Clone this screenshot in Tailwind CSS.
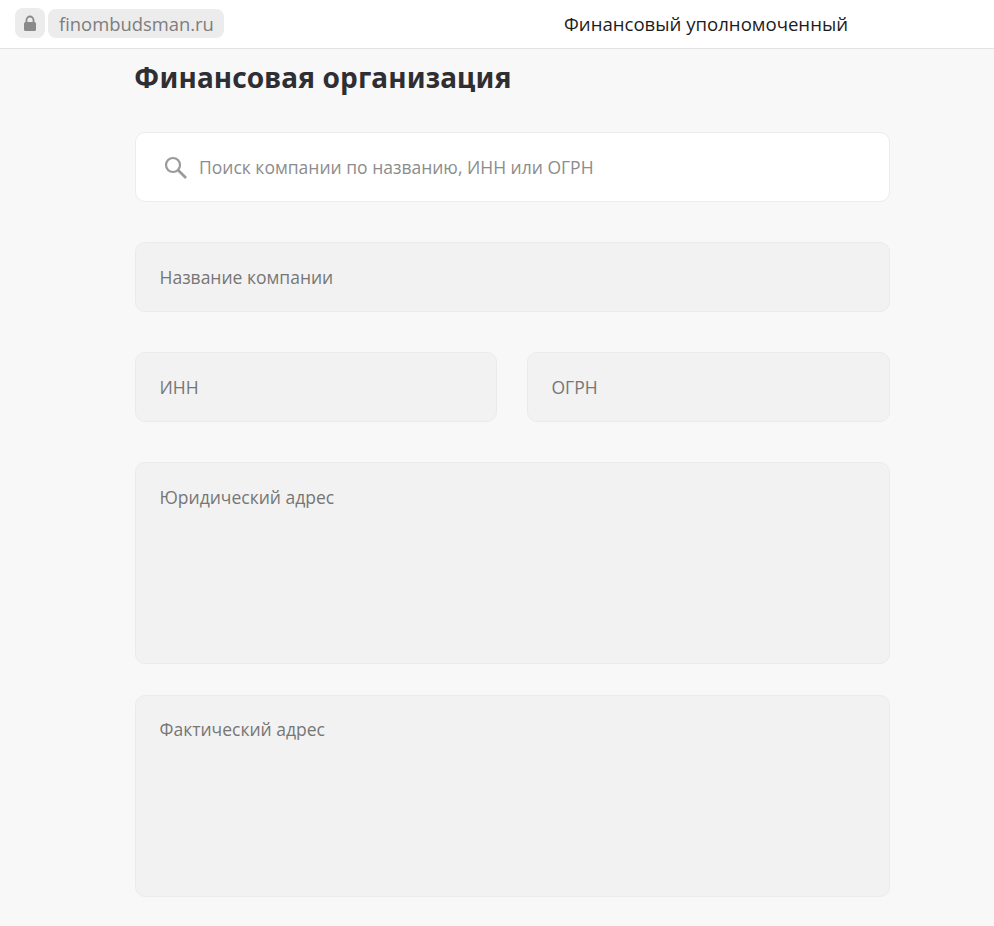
<!DOCTYPE html>
<html lang="ru">
<head>
    <meta charset="UTF-8">
    <meta name="viewport" content="width=device-width, initial-scale=1">
    <title>Финансовый уполномоченный</title>
    <script src="https://cdn.jsdelivr.net/npm/@tailwindcss/browser@4"></script>
</head>
<body class="bg-[#f8f8f8] font-['Open_Sans',sans-serif] overflow-hidden">

    <!-- Address bar -->
    <header class="h-[49px] bg-white border-b border-[#e2e2e2] flex items-center pl-[15px] pb-[2px]">
        <div class="w-[30px] h-[30px] rounded-lg bg-[#ececec] flex items-center justify-center">
            <svg width="14" height="17" viewBox="0 0 14 17">
                <path d="M3.5 8V5a3.5 3.5 0 0 1 7 0v3" fill="none" stroke="#8a8a8a" stroke-width="1.8"/>
                <rect x="1" y="7" width="12" height="9" rx="1.5" fill="#8a8a8a"/>
            </svg>
        </div>
        <div class="ml-[3px] w-[176px] h-[29px] pl-[11px] pt-[2px] rounded-lg bg-[#ececec] flex items-center text-[18.4px] text-[#7d7d7d]">finombudsman.ru</div>
        <div class="ml-[340px] pt-[1px] text-[18.6px] text-[#1c1c1c]">Финансовый уполномоченный</div>
    </header>

    <main class="w-[755px] ml-[135px]">
        <h1 class="font-['Noto_Sans',sans-serif] text-[28px] tracking-[0.14px] leading-[36px] font-bold text-[#2f2f33] mt-[10px] -ml-px">Финансовая организация</h1>

        <!-- Search -->
        <div class="mt-[37px] h-[70px] bg-white border border-[#ececec] rounded-[10px] flex items-center pl-[27px] gap-[11px]">
            <svg width="25" height="25" viewBox="0 0 25 25" fill="none" stroke="#9a9a9a">
                <circle cx="10" cy="10" r="7" stroke-width="2.2"/>
                <path d="M15 15l8 8" stroke-width="2.6"/>
            </svg>
            <span class="text-[17.5px] text-[#8c8c8c]">Поиск компании по названию, ИНН или ОГРН</span>
        </div>

        <form class="mt-[40px] flex flex-col text-[17.5px] text-[#767676]">
            <div class="h-[70px] bg-[#f2f2f2] border border-[#ebebeb] rounded-[10px] flex items-center px-[23.5px]">Название компании</div>

            <div class="mt-[40px] flex gap-[30px]">
                <div class="w-[362px] h-[70px] bg-[#f2f2f2] border border-[#ebebeb] rounded-[10px] flex items-center px-[23.5px]">ИНН</div>
                <div class="flex-1 h-[70px] bg-[#f2f2f2] border border-[#ebebeb] rounded-[10px] flex items-center px-[23.5px]">ОГРН</div>
            </div>

            <div class="mt-[40px] h-[202px] bg-[#f2f2f2] border border-[#ebebeb] rounded-[10px] px-[23.5px] pt-[20px] leading-[28px]">Юридический адрес</div>
            <div class="mt-[31px] h-[202px] bg-[#f2f2f2] border border-[#ebebeb] rounded-[10px] px-[23.5px] pt-[19px] leading-[28px]">Фактический адрес</div>
        </form>
    </main>

</body>
</html>
